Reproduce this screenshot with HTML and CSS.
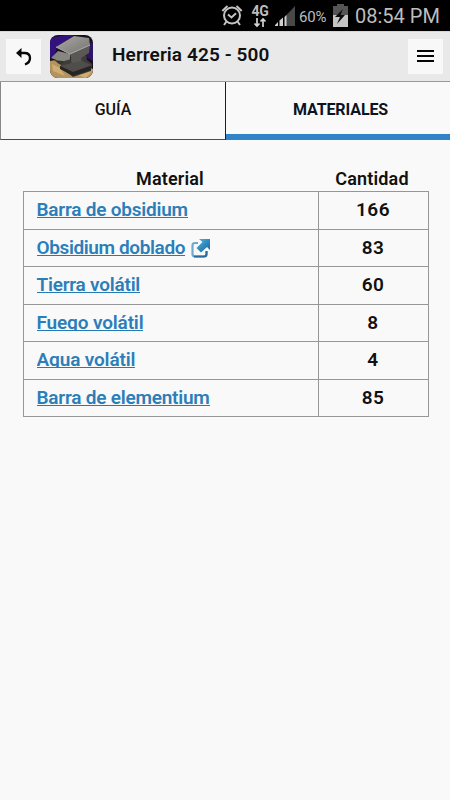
FILE: index.html
```html
<!DOCTYPE html>
<html lang="es">
<head>
<meta charset="utf-8">
<title>Herreria 425 - 500</title>
<link rel="stylesheet" href="styles.css">
</head>
<body>
<div class="status">
  <svg class="alarm" width="22" height="22" viewBox="0 0 22 22" fill="none" stroke="#c4c4c4" stroke-width="2"><circle cx="11" cy="11.5" r="8"/><path d="M7 10.500l3.500 3 4.500-4.200M5.500 17.500L3 21M16.500 17.500l2.500 3.500M1.300 7L6.500 2M20.700 7L15.500 2"/></svg>
  <div class="net"><span>4G</span><svg width="14" height="10" viewBox="0 0 14 10" fill="none" stroke="#d5d5d5" stroke-width="1.700"><path d="M4 0v8M1.500 5.500L4 8l2.500-2.500M10 9V1M7.500 3.500L10 1l2.500 2.500"/></svg></div>
  <svg class="signal" width="21" height="20" viewBox="0 0 21 20"><path d="M10 10.500L20 0v20H10z" fill="#484848"/><path d="M0 20v-1l3-3v4zM4.500 20v-5.500l3.500-3V20zM9.500 20V11l2-2v11z" fill="#d0d0d0"/></svg>
  <span class="percent">60%</span>
  <svg class="battery" width="15" height="23" viewBox="0 0 15 23"><path d="M4 0h7v2h4v9H0V2h4z" fill="#555"/><path d="M0 11h15v12H0z" fill="#c4c4c4"/><path d="M10 5L2 13h5l-3 7 8-9H7.500z" fill="#0a0a0a"/></svg>
  <span class="clock">08:54 PM</span>
</div>
<header class="bar">
  <div class="button"><svg width="35" height="35" viewBox="0 0 35 35"><path d="M13 14h5.500c7 0 7.500 9 0.500 11.500" fill="none" stroke="#080808" stroke-width="2.300"/><path d="M10 14l5.500-5v10z" fill="#080808"/></svg></div>
  <svg class="anvil" width="43" height="43" viewBox="0 0 43 43">
    <defs><linearGradient id="top" x2="1" y2="1"><stop stop-color="#aaa9a5"/><stop offset="1" stop-color="#74736f"/></linearGradient></defs>
    <path d="M0 0h43v43H0z" fill="#181020"/><path d="M0 3l16-3h8L7 12 4 22H0z" fill="#32127c"/><path d="M38 8h5v18l-7-4z" fill="#2d1465"/>
    <path d="M0 26l12-2 31 10v9H0z" fill="#b4935e"/><path d="M2 29l8 4 5 8-12-5zM25 39l14-8 4 4-7 8z" fill="#d0ad70"/>
    <path d="M1 23l7-7 12 3v9l-8-1z" fill="#878681"/><path d="M4 25l17 2 2 8-14-6z" fill="#35342f"/>
    <path d="M14 26l22-6 1 5 5 4-1 7-18 6-13-10z" fill="#3f3d3b"/>
    <path d="M20 19l20-9-1 8-8 5 1 5-10 2z" fill="#595854"/><path d="M10 31l12-3 10-2 9 4-18 7z" fill="#504e4a"/><path d="M10 31l13 6 18-6v4l-18 6-13-7z" fill="#262524"/>
    <path d="M6 12L24 1l15 2 1 7-20 9z" fill="url(#top)"/><path d="M6 12l14 7 20-9" fill="none" stroke="#b0afa9"/>
  </svg>
  <h1>Herreria 425 - 500</h1>
  <div class="button menu"><i></i><i></i><i></i></div>
</header>
<nav class="tabs">
  <div class="tab"><span>GUÍA</span></div>
  <div class="tab active"><span>MATERIALES</span></div>
</nav>
<main>
  <div class="row head"><div class="th"><span>Material</span></div><div class="th"><span>Cantidad</span></div></div>
  <div class="row"><div class="name"><a>Barra de obsidium</a></div><div class="num">166</div></div>
  <div class="row"><div class="name"><a class="tight">Obsidium doblado</a><svg class="ext" width="20" height="20" viewBox="0 0 20 20"><defs><linearGradient id="blue" x2="1" y2="1"><stop stop-color="#51b5df"/><stop offset="1" stop-color="#12629f"/></linearGradient></defs><path d="M7 5H4Q1.500 5 1.500 7.500V16q0 2.500 2.500 2.500h9q2.500 0 2.500-2.500v-3" fill="none" stroke="#71a8cf" stroke-width="2.200"/><path d="M3 18.500h10q2.500 0 2.500-2.500v-3" fill="none" stroke="#286b9d" stroke-width="2"/><path d="M8 1h11v11l-3-3-6 5.500-4.500-4.500 6-6z" fill="url(#blue)"/></svg></div><div class="num">83</div></div>
  <div class="row"><div class="name"><a>Tierra volátil</a></div><div class="num">60</div></div>
  <div class="row"><div class="name"><a class="clip">Fuego volátil</a></div><div class="num">8</div></div>
  <div class="row"><div class="name"><a class="clip">Agua volátil</a></div><div class="num">4</div></div>
  <div class="row"><div class="name"><a>Barra de elementium</a></div><div class="num">85</div></div>
</main>
</body>
</html>
```
FILE: styles.css
```css
* { box-sizing: border-box; }
body { margin: 0; width: 450px; height: 800px; overflow: hidden; background: #f9f9f9; color: #111; font-family: Roboto, sans-serif; }
svg { display: block; flex: none; }
.status { height: 31px; background: #000; display: flex; align-items: flex-start; color: #bdbdbd; white-space: nowrap; }
.alarm { margin: 4px 0 0 221px; }
.net { width: 20px; margin: 5px 0 0 7px; display: flex; flex-direction: column; align-items: center; }
.net span { font-size: 14px; font-weight: 700; line-height: 13px; letter-spacing: -.3px; }
.signal { margin: 6px 0 0 5px; }
.percent { font-size: 15px; line-height: 18px; margin: 8px 0 0 3px; width: 30px; letter-spacing: -.2px; }
.battery { margin: 4px 0 0 4px; }
.clock { font-size: 20px; line-height: 24px; margin: 4px 0 0 7px; }
.bar { height: 50px; background: #e9e9e9; display: flex; align-items: flex-start; padding: 0 7px 0 6px; border-top: 1px solid #d5d5d5; }
.button { width: 35px; height: 35px; margin-top: 7px; background: #f8f8f8; }
.anvil { margin: 3px 0 0 9px; border-radius: 8px; }
h1 { margin: 11px 0 0 19px; font-size: 19px; line-height: 24px; font-weight: 600; letter-spacing: .1px; }
.menu { margin-left: auto; display: flex; flex-direction: column; align-items: center; padding-top: 11px; gap: 3px; }
.menu i { width: 17px; height: 2px; background: #050505; }
.tabs { height: 59px; display: flex; border-top: 1px solid #999; }
.tab { width: 226px; border-left: 1px solid #888; border-right: 1px solid #10222c; border-bottom: 1px solid #175b90; text-align: center; font-size: 16px; font-weight: 500; line-height: 56px; }
.active { width: 224px; border: 0; border-bottom: 6px solid #3083c8; font-weight: 700; color: #0b1420; padding-left: 5px; letter-spacing: -.1px; }
main { margin: 29px 0 0 23px; width: 406px; }
.row { display: grid; grid-template-columns: 294px 110px; height: 37px; border: 1px solid #969696; border-bottom: 0; }
.row:nth-child(even) { height: 38px; }
.row:last-child { height: 38px; border-bottom: 1px solid #969696; }
.row.head { height: 22px; border: 0; }
.th { text-align: center; font-size: 18px; font-weight: 600; line-height: 19px; letter-spacing: .15px; }
.name { display: flex; align-items: flex-start; padding: 8px 0 0 12.500px; }
.name a { height: 18px; border-bottom: 1px solid #257ab4; color: #2c7eb9; font-size: 19px; font-weight: 600; line-height: 20px; letter-spacing: -.22px; white-space: nowrap; }
.name .tight { letter-spacing: -.38px; }
.name .clip { overflow: hidden; letter-spacing: -.15px; }
.num { border-left: 1px solid #969696; text-align: center; font-size: 19px; font-weight: 600; line-height: 35px; letter-spacing: .5px; padding-right: 1px; }
.ext { margin: 0 0 0 6px; }
```
